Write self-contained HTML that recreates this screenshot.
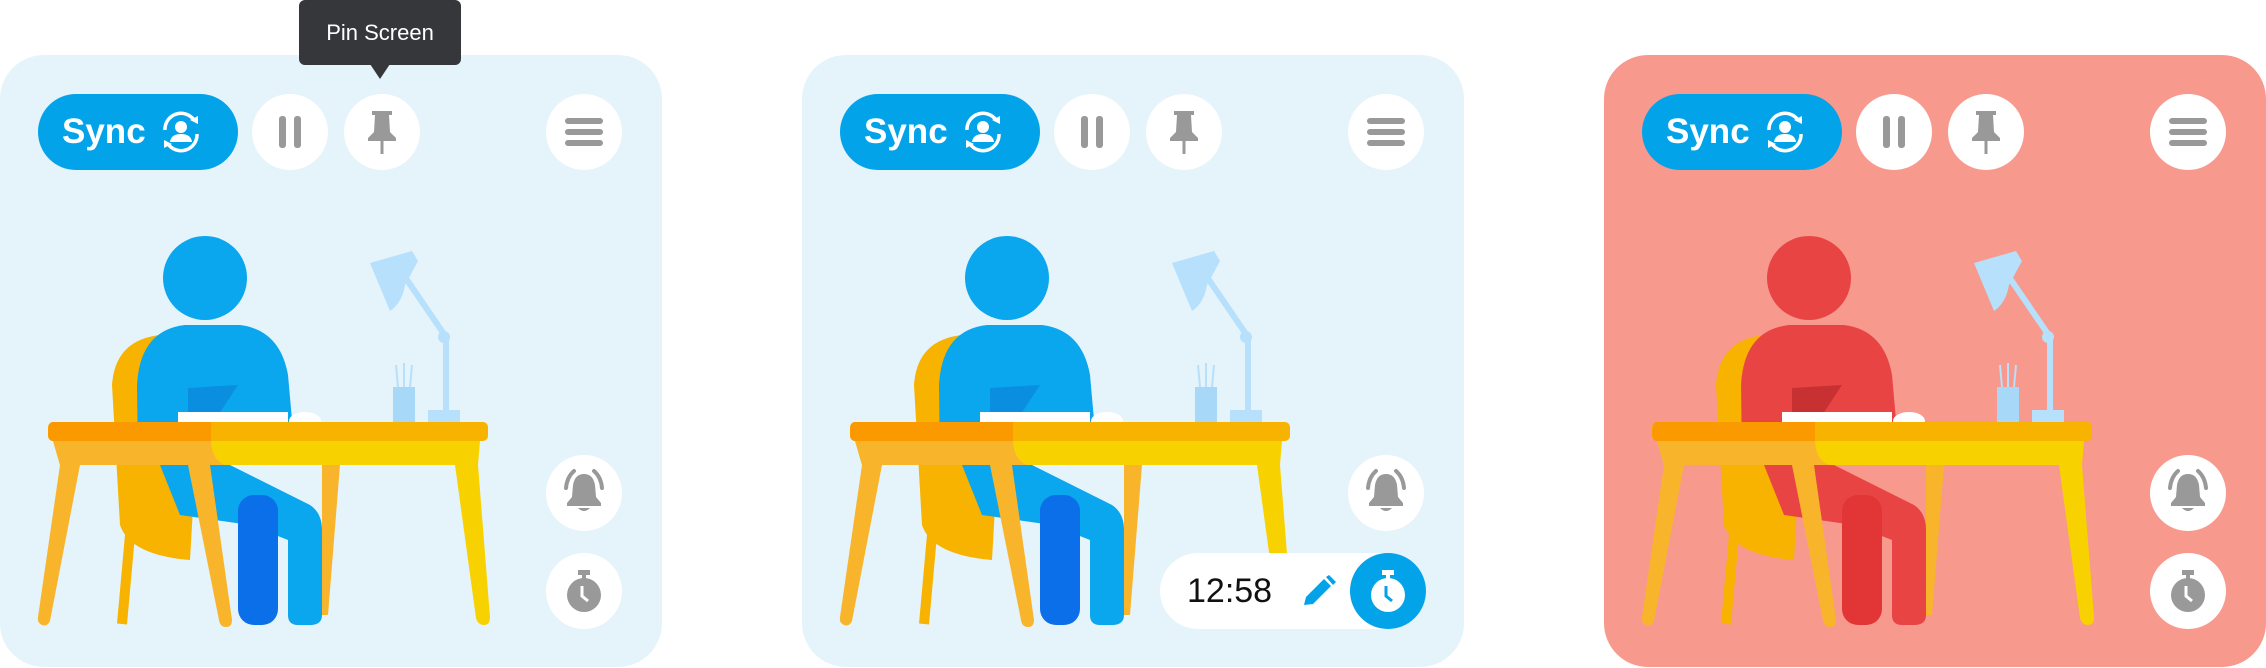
<!DOCTYPE html>
<html><head><meta charset="utf-8"><style>
body{margin:0;width:2266px;height:668px;background:#fff;position:relative;overflow:hidden;font-family:"Liberation Sans",sans-serif}
.card{position:absolute;top:55px;width:662px;height:612px;border-radius:44px;background:#e5f3fb;--p1:#0aa6ee;--p2:#0a6fe8;--pd:#0a84d8}
.red{background:#f8998e;--p1:#e94444;--p2:#e23535;--pd:#b82a2a}
.btn{position:absolute;width:76px;height:76px;border-radius:50%;background:#fff;top:39px}
.btn svg{position:absolute;left:0;top:0}
.sync{position:absolute;left:38px;top:39px;width:200px;height:76px;border-radius:38px;background:#03a3ea;color:#fff;font-weight:bold;font-size:35px}
.sync span{position:absolute;left:24px;top:18px}
.art{position:absolute;left:0;top:0}
.tip{z-index:5}
</style></head><body>

<svg width="0" height="0" style="position:absolute">
<defs>
<g id="art">
  <path d="M160 280 Q115 285 112 330 L120 470 Q130 500 190 505 L200 330 Z" fill="#f7b300"/>
  <line x1="130" y1="480" x2="122" y2="569" stroke="#f7b300" stroke-width="10"/>
  <path d="M185 270 Q140 275 137 330 L138 410 L296 410 L288 320 Q280 275 240 270 Z" fill="var(--p1)"/>
  <path d="M188 333 L238 330 L215 365 L188 362 Z" fill="var(--pd)" opacity=".7"/>
  <circle cx="205" cy="223" r="42" fill="var(--p1)"/>
  <path d="M370 208 L412 196 L418 206 L405 230 Q402 248 390 256 Z" fill="#b6e0fb"/>
  <path d="M405 222 L446 282 L446 360" stroke="#b6e0fb" stroke-width="6" fill="none"/>
  <circle cx="444" cy="282" r="6" fill="#b6e0fb"/>
  <rect x="428" y="355" width="32" height="12" fill="#b6e0fb"/>
  <rect x="393" y="332" width="22" height="36" fill="#a7d8f8"/>
  <path d="M398 332 L396 310 M404 332 L404 308 M410 332 L412 310" stroke="#b6e0fb" stroke-width="2"/>
  <rect x="178" y="357" width="110" height="12" fill="#fff"/>
  <ellipse cx="305" cy="366" rx="16" ry="9" fill="#fff"/>
  <rect x="48" y="367" width="440" height="19" rx="5" fill="#f7b300"/>
  <path d="M53 367 H211 V386 H53 Q48 386 48 378 Q48 367 53 367Z" fill="#fb9a00"/>
  <path d="M53 386 H480 L478 410 H60 Z" fill="#f8d200"/>
  <path d="M53 386 H211 Q212 405 225 410 H60 Z" fill="#f8b52c"/>
  <path d="M160 410 L230 410 L310 450 Q322 458 322 475 L322 560 Q322 570 310 570 L298 570 Q288 570 288 560 L288 485 L250 470 L180 460 Z" fill="var(--p1)"/>
  <rect x="238" y="440" width="40" height="130" rx="16" fill="var(--p2)"/>
  <path d="M60 410 L80 410 L50 566 Q47 572 42 570 Q37 568 38 562 Z" fill="#f8b52c"/>
  <path d="M188 410 L210 410 L232 565 Q232 572 226 572 Q220 572 219 565 Z" fill="#f8b52c"/>
  <path d="M455 410 L478 410 L490 562 Q490 570 484 570 Q478 570 476 563 Z" fill="#f8d200"/>
  <path d="M322 410 L340 410 L328 560 L322 560 Z" fill="#f8b52c"/>
</g>
<g id="ipause"><rect x="27" y="22" width="7" height="32" rx="3" fill="#999"/><rect x="42" y="22" width="7" height="32" rx="3" fill="#999"/></g>
<g id="ipin"><path d="M28 17 H48 V21 H45 L46 38 L52 44 V47 H24 V44 L30 38 L31 21 H28 Z" fill="#999"/><rect x="36.5" y="47" width="3" height="13" fill="#999"/></g>
<g id="imenu"><rect x="19" y="24" width="38" height="6" rx="3" fill="#999"/><rect x="19" y="35" width="38" height="6" rx="3" fill="#999"/><rect x="19" y="46" width="38" height="6" rx="3" fill="#999"/></g>
<g id="ibell"><path d="M38 19 Q29 19 27 30 L26 42 L21 48 V51 H55 V48 L50 42 L49 30 Q47 19 38 19Z" fill="#999"/><path d="M32 53 Q38 59 44 53Z" fill="#999"/><path d="M20 33 Q21 22 28 16 M56 33 Q55 22 48 16" stroke="#999" stroke-width="4" fill="none" stroke-linecap="round"/></g>
<g id="iwatch"><circle cx="38" cy="42" r="17" fill="#999"/><rect x="32" y="17" width="12" height="5" fill="#999"/><rect x="36" y="20" width="4" height="6" fill="#999"/><path d="M36 33 V43 L42 48" stroke="#fff" stroke-width="3" fill="none"/></g>
</defs></svg>

<div class="card" style="left:0">
  <svg class="art" width="662" height="612"><use href="#art"/></svg>
  <div class="sync"><span>Sync</span><svg style="position:absolute;left:118px;top:14px" width="50" height="48" viewBox="0 0 50 48"><circle cx="25" cy="19" r="6" fill="#fff"/><path d="M14 34 Q15 26 25 26 Q35 26 36 34Z" fill="#fff"/><path d="M9 22 A16 16 0 0 1 38 12 M41 26 A16 16 0 0 1 12 36" stroke="#fff" stroke-width="3.5" fill="none"/><path d="M34 12 L42 8 L42 16Z M16 36 L8 40 L8 32Z" fill="#fff"/></svg></div>
  <div class="btn" style="left:252px"><svg width="76" height="76"><use href="#ipause"/></svg></div>
  <div class="btn" style="left:344px"><svg width="76" height="76"><use href="#ipin"/></svg></div>
  <div class="btn" style="left:546px"><svg width="76" height="76"><use href="#imenu"/></svg></div>
  <div class="btn" style="left:546px;top:400px"><svg width="76" height="76"><use href="#ibell"/></svg></div>
  <div class="btn" style="left:546px;top:498px"><svg width="76" height="76"><use href="#iwatch"/></svg></div>
</div>

<div class="card" style="left:802px">
  <svg class="art" width="662" height="612"><use href="#art"/></svg>
  <div class="sync"><span>Sync</span><svg style="position:absolute;left:118px;top:14px" width="50" height="48" viewBox="0 0 50 48"><circle cx="25" cy="19" r="6" fill="#fff"/><path d="M14 34 Q15 26 25 26 Q35 26 36 34Z" fill="#fff"/><path d="M9 22 A16 16 0 0 1 38 12 M41 26 A16 16 0 0 1 12 36" stroke="#fff" stroke-width="3.5" fill="none"/><path d="M34 12 L42 8 L42 16Z M16 36 L8 40 L8 32Z" fill="#fff"/></svg></div>
  <div class="btn" style="left:252px"><svg width="76" height="76"><use href="#ipause"/></svg></div>
  <div class="btn" style="left:344px"><svg width="76" height="76"><use href="#ipin"/></svg></div>
  <div class="btn" style="left:546px"><svg width="76" height="76"><use href="#imenu"/></svg></div>
  <div class="btn" style="left:546px;top:400px"><svg width="76" height="76"><use href="#ibell"/></svg></div>
  <div style="position:absolute;left:358px;top:498px;width:266px;height:76px;border-radius:38px;background:#fff">
    <span style="position:absolute;left:27px;top:19px;font-size:34px;color:#111">12:58</span>
    <svg style="position:absolute;left:140px;top:22px" width="40" height="34" viewBox="0 0 40 34"><path d="M4 30 L6 22 L24 4 L31 11 L13 29 Z" fill="#03a3ea"/><path d="M26 2 L29 0 L36 7 L33 10Z" fill="#03a3ea"/></svg>
    <div style="position:absolute;right:0;top:0;width:76px;height:76px;border-radius:50%;background:#03a3ea">
      <svg width="76" height="76"><circle cx="38" cy="42" r="17" fill="#fff"/><rect x="32" y="17" width="12" height="5" fill="#fff"/><rect x="36" y="20" width="4" height="6" fill="#fff"/><path d="M36 33 V43 L42 48" stroke="#03a3ea" stroke-width="3" fill="none"/></svg>
    </div>
  </div>
</div>

<div class="card red" style="left:1604px">
  <svg class="art" width="662" height="612"><use href="#art"/></svg>
  <div class="sync"><span>Sync</span><svg style="position:absolute;left:118px;top:14px" width="50" height="48" viewBox="0 0 50 48"><circle cx="25" cy="19" r="6" fill="#fff"/><path d="M14 34 Q15 26 25 26 Q35 26 36 34Z" fill="#fff"/><path d="M9 22 A16 16 0 0 1 38 12 M41 26 A16 16 0 0 1 12 36" stroke="#fff" stroke-width="3.5" fill="none"/><path d="M34 12 L42 8 L42 16Z M16 36 L8 40 L8 32Z" fill="#fff"/></svg></div>
  <div class="btn" style="left:252px"><svg width="76" height="76"><use href="#ipause"/></svg></div>
  <div class="btn" style="left:344px"><svg width="76" height="76"><use href="#ipin"/></svg></div>
  <div class="btn" style="left:546px"><svg width="76" height="76"><use href="#imenu"/></svg></div>
  <div class="btn" style="left:546px;top:400px"><svg width="76" height="76"><use href="#ibell"/></svg></div>
  <div class="btn" style="left:546px;top:498px"><svg width="76" height="76"><use href="#iwatch"/></svg></div>
</div>

<div class="tip" style="position:absolute;left:299px;top:0;width:162px;height:65px;background:#35373b;border-radius:6px;color:#fff;font-size:22px;text-align:center;line-height:65px">Pin Screen</div>
<div class="tip" style="position:absolute;left:370px;top:64px;width:0;height:0;border-left:10px solid transparent;border-right:10px solid transparent;border-top:15px solid #35373b"></div>
</body></html>
